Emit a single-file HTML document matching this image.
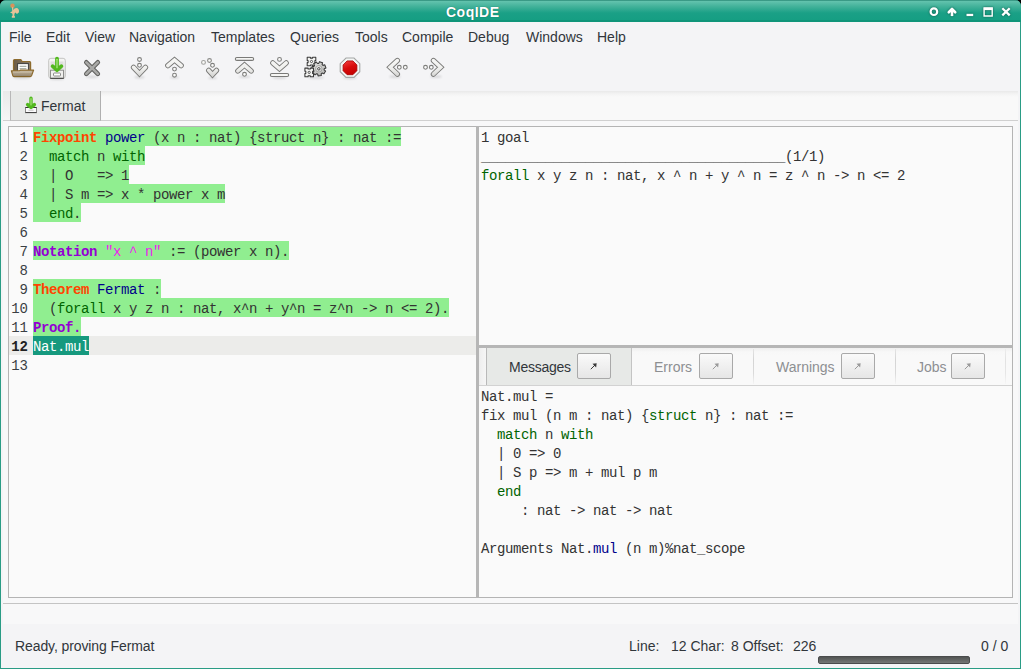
<!DOCTYPE html>
<html><head><meta charset="utf-8">
<style>
*{box-sizing:border-box;margin:0;padding:0}
html,body{width:1021px;height:669px;overflow:hidden;background:#000}
body{font-family:"Liberation Sans",sans-serif;font-size:14px;color:#31363b;position:relative}
.a{position:absolute}
#win{position:absolute;left:0;top:0;width:1021px;height:669px;background:#2a9c85;border-radius:6px 6px 0 0;overflow:hidden}
#title{position:absolute;left:0;top:0;width:1021px;height:22px;background:linear-gradient(#3a9a86 0px,#3a9a86 1px,#64c3ae 1px,#3fb098 7px,#1aa086 13px,#169e83 20px,#0f9579 20px,#0f9579 22px)}
#title .t{position:absolute;left:446px;top:4px;color:#fff;font-weight:bold;font-size:14px;line-height:16px;letter-spacing:0.5px;text-shadow:0 0 1px #0b5e4d}
#client{position:absolute;left:1px;top:22px;width:1019px;height:646px;background:#f4f4f6}
.menu{position:absolute;top:7px;line-height:16px;color:#31363b;white-space:nowrap}
#tabbar{position:absolute;left:2px;top:69px;width:1015px;height:30px;background:linear-gradient(#e9e9e9 0px,#f4f4f4 3px,#f9f9f9 6px);border-bottom:1px solid #d0d0d0}
#tab{position:absolute;left:9px;top:69px;width:91px;height:30px;background:#e7e9e7;border-left:1px solid #b8b8b8;border-right:1px solid #b0b0b0;border-bottom:1px solid #c2c2c2}
#body2{position:absolute;left:2px;top:99px;width:1015px;height:503px;background:#f8f8f9}
.pane{position:absolute;background:#fafafa;border:1px solid #b4b4b4}
.mono{font-family:"Liberation Mono",monospace;font-size:14px;letter-spacing:-0.4px}
.ln{position:absolute;left:0;width:19px;text-align:right;height:19px;line-height:23px;font-size:14px;color:#3a3f44;letter-spacing:0}
.row{position:absolute;left:0;height:19px;line-height:23px;white-space:pre;color:#333}
.hlb{position:absolute;left:24px;height:19px;background:#90ee90}
.kw{color:#ff4500;font-weight:bold}
.id{color:#00008b}
.vi{color:#9400d3;font-weight:bold}
.str{color:#ee22ee}
.g{color:#006400}
.stat{position:absolute;line-height:16px;white-space:nowrap;color:#31363b}
.mtab{position:absolute;top:0;height:38px;border-bottom:1px solid #cfcfcf}
.mbtn{position:absolute;top:5px;width:34px;height:26px;border:1px solid #a9a9a9;border-radius:2px;background:linear-gradient(#fafafa,#e6e6e6)}
.mlab{position:absolute;top:11px;line-height:16px;white-space:nowrap}
</style></head><body>
<div id="win">
 <div id="title">
  <svg class="a" style="left:0;top:0" width="24" height="22" viewBox="0 0 24 22">
   <circle cx="12.5" cy="5.8" r="2.2" fill="#d9925a"/>
   <path d="M12 7.2 L13.2 7.2 L13.4 10.2 C14 8.8 15 8 16.4 8 C18.4 8 19.2 10 19 11.6 C18.8 13.2 17.6 14 16.2 13.6 L15.4 12.4 L14.6 13.6 L14.2 15.6 L14.9 16.2 L14.9 17.8 L11.8 17.8 L11.8 16.2 L12.6 15.6 L12.3 13.6 L10 12.4 L12.2 11.2 Z" fill="#e6c398"/>
  </svg>
  <div class="t">CoqIDE</div>
  <svg class="a" style="left:0;top:0;filter:drop-shadow(0 0 0.8px #0b5a4a)" width="1021" height="22" viewBox="0 0 1021 22">
   <circle cx="933.9" cy="11.7" r="3.3" fill="none" stroke="#fff" stroke-width="2.2"/>
   <path d="M952 16.1 V9.5" stroke="#fff" stroke-width="2.6"/><path d="M948.8 12.2 L952 9 L955.2 12.2" fill="none" stroke="#fff" stroke-width="2.7" stroke-linecap="round" stroke-linejoin="round"/>
   <rect x="966.5" y="13.8" width="6.7" height="2.3" fill="#fff"/>
   <path d="M984.1 8 H992.2 V16 H984.1 Z M984.1 9.2 H992.2" fill="none" stroke="#fff" stroke-width="1.4"/>
   <rect x="983.8" y="7.7" width="8.7" height="2.4" fill="#fff"/>
   <path d="M1002.3 8.2 L1009.7 15.4 M1009.7 8.2 L1002.3 15.4" stroke="#fff" stroke-width="2.3"/>
  </svg>
 </div>
 <div id="client">
  <span class="menu" style="left:8px">File</span>
  <span class="menu" style="left:45px">Edit</span>
  <span class="menu" style="left:84px">View</span>
  <span class="menu" style="left:128px">Navigation</span>
  <span class="menu" style="left:210px">Templates</span>
  <span class="menu" style="left:289px">Queries</span>
  <span class="menu" style="left:354px">Tools</span>
  <span class="menu" style="left:401px">Compile</span>
  <span class="menu" style="left:467px">Debug</span>
  <span class="menu" style="left:525px">Windows</span>
  <span class="menu" style="left:596px">Help</span>
  <div id="tabbar"></div>
  <div class="a" style="left:2px;top:69px;width:8px;height:29px;background:linear-gradient(#eaeaea,#f6f6f6)"></div><div id="tab"></div>
  <span class="a" style="left:40px;top:76px;line-height:16px">Fermat</span>
  <div id="body2"></div>
 </div>

 <!-- toolbar icons (page coords) -->
 <svg class="a" style="left:0;top:0" width="460" height="120" viewBox="0 0 460 120">
  <!-- open folder -->
  <defs>
   <linearGradient id="fb" x1="0" y1="0" x2="1" y2="0"><stop offset="0" stop-color="#6a5a46"/><stop offset="1" stop-color="#8e7e68"/></linearGradient>
   <linearGradient id="ff" x1="0" y1="0" x2="0" y2="1"><stop offset="0" stop-color="#c2b49c"/><stop offset="1" stop-color="#968770"/></linearGradient>
  </defs>
  <path d="M13.5 71 V60.6 Q13.5 59.5 14.6 59.5 H20.8 L22.3 61.5 H29.6 Q30.6 61.5 30.6 62.5 V71 Z" fill="url(#fb)" stroke="#8d6b2e" stroke-width="1.2"/>
  <rect x="17.6" y="63.6" width="10.8" height="8" fill="#fdfdfd" stroke="#3d3d3d" stroke-width="1"/>
  <path d="M19.6 66.4 H26.4 M19.6 68.6 H26.4" stroke="#aab0a8" stroke-width="1.3"/>
  <path d="M11.4 70.8 H19.6 L20.6 70.1 H33.6 L31.6 75.6 Q31.2 76.6 30.2 76.6 H14 Q13 76.6 12.8 75.6 Z" fill="url(#ff)" stroke="#8d6b2e" stroke-width="1.2" stroke-linejoin="round"/>
  <path d="M13 72 H31.8" stroke="#d2c7b2" stroke-width="0.9"/>
  <!-- save cabinet -->
  <defs>
   <linearGradient id="cab" x1="0" y1="0" x2="0" y2="1"><stop offset="0" stop-color="#f6f6f4"/><stop offset="1" stop-color="#e2e2e0"/></linearGradient>
  </defs>
  <rect x="48.7" y="58.3" width="16.6" height="20" rx="2.2" fill="url(#cab)" stroke="#c4c4c2" stroke-width="1"/>
  <rect x="50.5" y="61.5" width="13" height="7.5" fill="#dfdfdd"/>
  <rect x="50.5" y="70.2" width="13" height="8.3" fill="#f0f0ee" stroke="#8e8e8c" stroke-width="1"/>
  <path d="M50.5 78.3 H63.5" stroke="#555553" stroke-width="1.2"/>
  <rect x="53.5" y="73" width="7" height="3" rx="0.8" fill="#fff" stroke="#8a8a88" stroke-width="1"/>
  <path d="M57 58.6 V68.6 M52.6 66.2 L57 70.2 L61.4 66.2" fill="none" stroke="#52b81e" stroke-width="3.8" stroke-linecap="round" stroke-linejoin="round"/>
  <path d="M57 59.2 V67.8" fill="none" stroke="#b4f08a" stroke-width="1.1" stroke-linecap="round"/>
  <defs><linearGradient id="cg" gradientUnits="userSpaceOnUse" x1="0" y1="58" x2="0" y2="77"><stop offset="0" stop-color="#f8f8f6"/><stop offset="0.55" stop-color="#efefed"/><stop offset="1" stop-color="#d2d2d0"/></linearGradient><filter id="blr" x="-50%" y="-200%" width="200%" height="500%"><feGaussianBlur stdDeviation="0.9"/></filter></defs>
  <g fill="#000" opacity="0.13" filter="url(#blr)">
   <ellipse cx="139.5" cy="77.2" rx="5" ry="1.2"/><ellipse cx="174.5" cy="77.6" rx="4.5" ry="1.1"/>
   <ellipse cx="212.5" cy="78" rx="4.5" ry="1.1"/><ellipse cx="244.5" cy="76.8" rx="6" ry="1.1"/>
   <ellipse cx="279.5" cy="77.6" rx="7" ry="1.1"/><ellipse cx="316" cy="77.6" rx="8" ry="1.1"/>
   <ellipse cx="350" cy="78" rx="7" ry="1.2"/><ellipse cx="395" cy="76.6" rx="6" ry="1.1"/>
   <ellipse cx="436" cy="76.6" rx="6" ry="1.1"/><ellipse cx="92" cy="76.8" rx="6" ry="1.1"/>
   <ellipse cx="22" cy="77.6" rx="9" ry="1.1"/><ellipse cx="57" cy="79" rx="7" ry="1.1"/>
  </g>
  <!-- close X -->
  <path d="M86.3 62.3 L97.8 73.8 M97.8 62.3 L86.3 73.8" stroke="#5f5f5d" stroke-width="4.6" stroke-linecap="round"/>
  <path d="M86.3 62.3 L97.8 73.8 M97.8 62.3 L86.3 73.8" stroke="#a9a9a7" stroke-width="2.6" stroke-linecap="round"/>
<circle cx="139.5" cy="59.5" r="1.9" fill="#fbfbfa" stroke="#7e7e7c" stroke-width="1.1"/>
<circle cx="139.5" cy="65.3" r="1.9" fill="#fbfbfa" stroke="#7e7e7c" stroke-width="1.1"/>
<path d="M133.5 67.3 L139.5 73.6 L145.5 67.3" fill="none" stroke="#7a7a78" stroke-width="5.3" stroke-linecap="round" stroke-linejoin="miter"/><path d="M133.5 67.3 L139.5 73.6 L145.5 67.3" fill="none" stroke="url(#cg)" stroke-width="3.5" stroke-linecap="round" stroke-linejoin="miter"/>
<path d="M167.8 65.6 L174.5 60.0 L181.2 65.6" fill="none" stroke="#7a7a78" stroke-width="5.3" stroke-linecap="round" stroke-linejoin="miter"/><path d="M167.8 65.6 L174.5 60.0 L181.2 65.6" fill="none" stroke="url(#cg)" stroke-width="3.5" stroke-linecap="round" stroke-linejoin="miter"/>
<circle cx="174.5" cy="69.1" r="1.9" fill="#fbfbfa" stroke="#7e7e7c" stroke-width="1.1"/>
<circle cx="174.5" cy="75.2" r="1.9" fill="#fbfbfa" stroke="#7e7e7c" stroke-width="1.1"/>
<circle cx="203.5" cy="62.4" r="1.9" fill="#fafaf8" stroke="#a0a09e" stroke-width="1.1"/>
<circle cx="209.5" cy="60.5" r="1.9" fill="#fafaf8" stroke="#8a8a88" stroke-width="1.1"/>
<circle cx="212.5" cy="65.3" r="1.9" fill="#fbfbfa" stroke="#7e7e7c" stroke-width="1.1"/>
<path d="M208.7 70.4 L212.5 74.6 L216.5 70.4" fill="none" stroke="#7a7a78" stroke-width="5.3" stroke-linecap="round" stroke-linejoin="miter"/><path d="M208.7 70.4 L212.5 74.6 L216.5 70.4" fill="none" stroke="url(#cg)" stroke-width="3.5" stroke-linecap="round" stroke-linejoin="miter"/>
<path d="M236.8 58.9 L252.2 58.9" stroke="#7a7a78" stroke-width="4.0" stroke-linecap="round"/><path d="M236.8 58.9 L252.2 58.9" stroke="#f6f6f4" stroke-width="1.8" stroke-linecap="round"/>
<path d="M237.8 71.0 L244.5 65.1 L251.2 71.0" fill="none" stroke="#7a7a78" stroke-width="5.3" stroke-linecap="round" stroke-linejoin="miter"/><path d="M237.8 71.0 L244.5 65.1 L251.2 71.0" fill="none" stroke="url(#cg)" stroke-width="3.5" stroke-linecap="round" stroke-linejoin="miter"/>
<circle cx="244.5" cy="74.3" r="1.9" fill="#fbfbfa" stroke="#7e7e7c" stroke-width="1.1"/>
<circle cx="279.5" cy="59.4" r="1.9" fill="#fbfbfa" stroke="#7e7e7c" stroke-width="1.1"/>
<path d="M272.8 62.9 L279.5 68.7 L286.2 62.9" fill="none" stroke="#7a7a78" stroke-width="5.3" stroke-linecap="round" stroke-linejoin="miter"/><path d="M272.8 62.9 L279.5 68.7 L286.2 62.9" fill="none" stroke="url(#cg)" stroke-width="3.5" stroke-linecap="round" stroke-linejoin="miter"/>
<path d="M271.8 75.0 L287.2 75.0" stroke="#7a7a78" stroke-width="4.0" stroke-linecap="round"/><path d="M271.8 75.0 L287.2 75.0" stroke="#f6f6f4" stroke-width="1.8" stroke-linecap="round"/>
<path d="M397.4 60.5 L390.1 67.3 L397.4 74.1" fill="none" stroke="#7a7a78" stroke-width="5.3" stroke-linecap="round" stroke-linejoin="miter"/><path d="M397.4 60.5 L390.1 67.3 L397.4 74.1" fill="none" stroke="url(#cg)" stroke-width="3.5" stroke-linecap="round" stroke-linejoin="miter"/>
<circle cx="399.3" cy="67.3" r="1.9" fill="#fbfbfa" stroke="#7e7e7c" stroke-width="1.1"/>
<circle cx="405.3" cy="67.3" r="1.9" fill="#fbfbfa" stroke="#7e7e7c" stroke-width="1.1"/>
<circle cx="425.5" cy="67.3" r="1.9" fill="#fbfbfa" stroke="#7e7e7c" stroke-width="1.1"/>
<circle cx="431.3" cy="67.3" r="1.9" fill="#fbfbfa" stroke="#7e7e7c" stroke-width="1.1"/>
<path d="M433.4 60.5 L440.7 67.3 L433.4 74.1" fill="none" stroke="#7a7a78" stroke-width="5.3" stroke-linecap="round" stroke-linejoin="miter"/><path d="M433.4 60.5 L440.7 67.3 L433.4 74.1" fill="none" stroke="url(#cg)" stroke-width="3.5" stroke-linecap="round" stroke-linejoin="miter"/>
<defs><radialGradient id="gg" cx="0.45" cy="0.4" r="0.6"><stop offset="0" stop-color="#efefed"/><stop offset="1" stop-color="#b0b0ae"/></radialGradient></defs>
<g stroke="#3a3a3a" stroke-linejoin="round">
<path d="M307.20 57.20 L310.40 57.20 L310.40 58.10 L312.60 58.10 L312.60 57.20 L315.80 57.20 L315.80 60.40 L314.90 60.40 L314.90 62.60 L315.80 62.60 L315.80 65.80 L312.60 65.80 L312.60 64.90 L310.40 64.90 L310.40 65.80 L307.20 65.80 L307.20 62.60 L308.10 62.60 L308.10 60.40 L307.20 60.40Z" fill="#f2f2f0" stroke-width="1.05"/>
<circle cx="311.5" cy="61.5" r="1.1" fill="#fff" stroke="#444" stroke-width="0.9"/>
<path d="M322.98 65.38 L324.83 64.86 L325.95 67.93 L324.20 68.73 L324.08 69.93 L325.64 71.06 L323.94 73.85 L322.22 72.98 L321.21 73.63 L321.30 75.55 L318.06 75.96 L317.67 74.08 L316.52 73.70 L315.08 74.96 L312.74 72.68 L313.97 71.21 L313.55 70.07 L311.66 69.73 L311.98 66.48 L313.90 66.52 L314.53 65.49 L313.62 63.80 L316.36 62.03 L317.53 63.55 L318.73 63.40 L319.48 61.63 L322.58 62.67 L322.11 64.53Z" fill="url(#gg)" stroke-width="1.05"/>
<circle cx="318.8" cy="68.8" r="3.3" fill="none" stroke="#a4a4a2" stroke-width="1"/>
<circle cx="318.8" cy="68.8" r="1.2" fill="#fff" stroke="#333" stroke-width="0.9"/>
<path d="M304.90 68.10 L308.10 68.10 L308.10 69.00 L310.30 69.00 L310.30 68.10 L313.50 68.10 L313.50 71.30 L312.60 71.30 L312.60 73.50 L313.50 73.50 L313.50 76.70 L310.30 76.70 L310.30 75.80 L308.10 75.80 L308.10 76.70 L304.90 76.70 L304.90 73.50 L305.80 73.50 L305.80 71.30 L304.90 71.30Z" fill="#f2f2f0" stroke-width="1.05"/>
<circle cx="309.2" cy="72.4" r="1.1" fill="#fff" stroke="#444" stroke-width="0.9"/>
</g>
  <!-- stop -->
  <polygon points="346,58 354,58 359.8,63.7 359.8,71.7 354,77.4 346,77.4 340.2,71.7 340.2,63.7" fill="#f4f6f5" stroke="#a4a6a5" stroke-width="1.1"/>
  <defs><linearGradient id="rd" x1="0.2" y1="0" x2="0.6" y2="1"><stop offset="0" stop-color="#f03a3a"/><stop offset="0.5" stop-color="#d80c0c"/><stop offset="1" stop-color="#c40000"/></linearGradient></defs><polygon points="347.1,60.9 352.9,60.9 356.9,64.9 356.9,70.7 352.9,74.7 347.1,74.7 343.1,70.7 343.1,64.9" fill="url(#rd)" stroke="#a80000" stroke-width="0.8"/>
  <!-- tab icon -->
  <rect x="25.5" y="107.5" width="11" height="5.2" fill="#fbfbfb" stroke="#8a8a88" stroke-width="1"/>
  <path d="M25.5 112.5 H36.5" stroke="#444" stroke-width="1.2"/>
  <path d="M25.5 107.5 H36.5" stroke="#333" stroke-width="1"/>
  <path d="M28.5 110.2 H33.5" stroke="#bbb" stroke-width="0.9"/>
  <path d="M31 98.2 V106 M27.6 104.6 L31 107.4 L34.4 104.6" fill="none" stroke="#52b81e" stroke-width="3.4" stroke-linecap="round" stroke-linejoin="round"/>
  <path d="M31 98.6 V105" stroke="#b4f08a" stroke-width="1" stroke-linecap="round"/>
 </svg>

 <!-- editor pane -->
 <div class="pane" style="left:8px;top:126px;width:468px;height:472px;border-right:none"></div>
 <div class="a" style="left:476px;top:126px;width:3px;height:472px;background:#b6b6b6"></div>
 <div class="a" style="left:9px;top:336px;width:467px;height:19px;background:#ececea"></div>
 <div class="a mono" style="left:9px;top:127px;width:467px;height:470px">
  <div class="hlb" style="top:0;width:368px"></div>
  <div class="hlb" style="top:19px;width:112px"></div>
  <div class="hlb" style="top:38px;width:96px"></div>
  <div class="hlb" style="top:57px;width:192px"></div>
  <div class="hlb" style="top:76px;width:48px"></div>
  <div class="hlb" style="top:114px;width:256px"></div>
  <div class="hlb" style="top:152px;width:128px"></div>
  <div class="hlb" style="top:171px;width:416px"></div>
  <div class="hlb" style="top:190px;width:48px"></div>
  <div class="hlb" style="top:209px;width:56px;background:#16997e"></div>
  <div class="ln" style="top:0">1</div>
  <div class="ln" style="top:19px">2</div>
  <div class="ln" style="top:38px">3</div>
  <div class="ln" style="top:57px">4</div>
  <div class="ln" style="top:76px">5</div>
  <div class="ln" style="top:95px">6</div>
  <div class="ln" style="top:114px">7</div>
  <div class="ln" style="top:133px">8</div>
  <div class="ln" style="top:152px">9</div>
  <div class="ln" style="top:171px">10</div>
  <div class="ln" style="top:190px">11</div>
  <div class="ln" style="top:209px;font-weight:bold;color:#222">12</div>
  <div class="ln" style="top:228px">13</div>
  <div class="row" style="left:24px;top:0"><span class="kw">Fixpoint</span> <span class="id">power</span> (x n : nat) {struct n} : nat :=</div>
  <div class="row" style="left:24px;top:19px">  <span class="g">match</span> n <span class="g">with</span></div>
  <div class="row" style="left:24px;top:38px">  | O   =&gt; 1</div>
  <div class="row" style="left:24px;top:57px">  | S m =&gt; x * power x m</div>
  <div class="row" style="left:24px;top:76px">  <span class="g">end</span>.</div>
  <div class="row" style="left:24px;top:114px"><span class="vi">Notation</span> <span class="str">"x ^ n"</span> := (power x n).</div>
  <div class="row" style="left:24px;top:152px"><span class="kw">Theorem</span> <span class="id">Fermat</span> :</div>
  <div class="row" style="left:24px;top:171px">  (<span class="g">forall</span> x y z n : nat, x^n + y^n = z^n -&gt; n &lt;= 2).</div>
  <div class="row" style="left:24px;top:190px"><span class="vi">Proof.</span></div>
  <div class="row" style="left:24px;top:209px;color:#fff">Nat.mul</div>
 </div>

 <!-- goal pane -->
 <div class="pane" style="left:479px;top:126px;width:534px;height:219px;border-left:none;border-bottom:none"></div>
 <div class="a mono" style="left:481px;top:127px">
  <div class="row" style="top:0">1 goal</div>
  <div class="row" style="top:19px">______________________________________(1/1)</div>
  <div class="row" style="top:38px"><span class="g">forall</span> x y z n : nat, x ^ n + y ^ n = z ^ n -&gt; n &lt;= 2</div>
 </div>
 <div class="a" style="left:476px;top:345px;width:537px;height:3px;background:#b6b6b6"></div>

 <!-- message pane -->
 <div class="pane" style="left:479px;top:348px;width:534px;height:250px;border-left:none;border-top:none"></div>
 <div class="a" style="left:479px;top:348px;width:533px;height:38px;background:linear-gradient(#efefef 0px,#f8f8f8 4px,#f9f9f9 8px);border-bottom:1px solid #d2d2d2">
  <div class="a" style="left:0;top:0;width:7px;height:37px;background:linear-gradient(90deg,#eeeeee,#f6f6f6)"></div>
  <div class="a" style="left:7px;top:0;width:146px;height:37px;background:#e7e9e7;border-left:1px solid #b9b9b9;border-right:1px solid #c4c4c4"></div>
  <span class="mlab" style="left:30px;letter-spacing:-0.25px">Messages</span>
  <div class="mbtn" style="left:98px"></div>
  <div class="a" style="left:274px;top:1px;width:1px;height:35px;background:linear-gradient(#e4e4e4,#d4d4d4 30%,#dadada 70%,#f4f4f4)"></div>
  <span class="mlab" style="left:175px;color:#8d8f92">Errors</span>
  <div class="mbtn" style="left:220px"></div>
  <div class="a" style="left:416px;top:1px;width:1px;height:35px;background:linear-gradient(#e4e4e4,#d4d4d4 30%,#dadada 70%,#f4f4f4)"></div>
  <span class="mlab" style="left:297px;color:#8d8f92">Warnings</span>
  <div class="mbtn" style="left:362px"></div>
  <div class="a" style="left:526px;top:1px;width:1px;height:35px;background:linear-gradient(#ececec,#e2e2e2 30%,#e6e6e6 70%,#f6f6f6)"></div>
  <span class="mlab" style="left:438px;color:#8d8f92">Jobs</span>
  <div class="mbtn" style="left:472px"></div>
  <svg class="a" style="left:0;top:0" width="533" height="38" viewBox="0 0 533 38">
   <g fill="none"><path d="M111.8 21.2 L116.0 17" stroke="#3a3a3a" stroke-width="1"/><polygon points="117.7,15.2 117.1,19.4 113.5,15.8" fill="#3a3a3a"/><path d="M233.8 21.2 L238.0 17" stroke="#9a9a9a" stroke-width="1"/><polygon points="239.7,15.2 239.1,19.4 235.5,15.8" fill="#9a9a9a"/><path d="M375.8 21.2 L380.0 17" stroke="#9a9a9a" stroke-width="1"/><polygon points="381.7,15.2 381.1,19.4 377.5,15.8" fill="#9a9a9a"/><path d="M485.8 21.2 L490.0 17" stroke="#9a9a9a" stroke-width="1"/><polygon points="491.7,15.2 491.1,19.4 487.5,15.8" fill="#9a9a9a"/></g>
  </svg>
 </div>
 <div class="a mono" style="left:481px;top:386px">
  <div class="row" style="top:0">Nat.mul =</div>
  <div class="row" style="top:19px">fix mul (n m : nat) {<span class="g">struct</span> n} : nat :=</div>
  <div class="row" style="top:38px">  <span class="g">match</span> n <span class="g">with</span></div>
  <div class="row" style="top:57px">  | 0 =&gt; 0</div>
  <div class="row" style="top:76px">  | S p =&gt; m + mul p m</div>
  <div class="row" style="top:95px">  <span class="g">end</span></div>
  <div class="row" style="top:114px">     : nat -&gt; nat -&gt; nat</div>
  <div class="row" style="top:152px">Arguments Nat.<span class="id">mul</span> (n m)%nat_scope</div>
 </div>

 <div class="a" style="left:3px;top:603px;width:1015px;height:1px;background:#c4c4c4"></div>

 <span class="stat" style="left:15px;top:638px;letter-spacing:-0.1px">Ready, proving Fermat</span>
 <span class="stat" style="left:629px;top:638px">Line:</span>
 <span class="stat" style="left:671px;top:638px">12 Char:</span>
 <span class="stat" style="left:731px;top:638px">8 Offset:</span>
 <span class="stat" style="left:793px;top:638px">226</span>
 <div class="a" style="left:818px;top:656px;width:152px;height:8px;background:linear-gradient(#525453,#747675);border:1px solid #4a4b4c;border-radius:2px"></div>
 <span class="stat" style="left:981px;top:638px">0 / 0</span>
</div>
</body></html>
